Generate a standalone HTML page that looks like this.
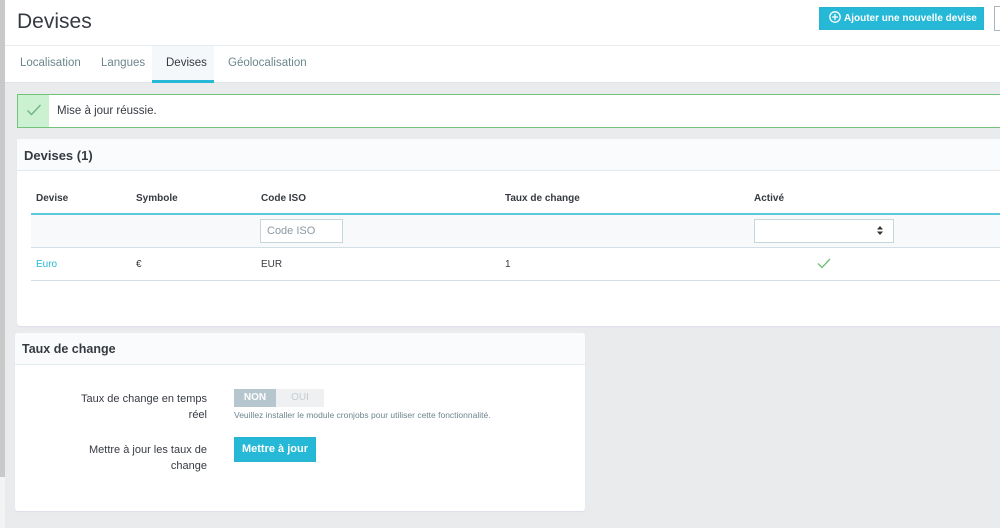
<!DOCTYPE html><html><head><meta charset="utf-8"><style>
*{box-sizing:border-box;margin:0;padding:0}
body{width:1000px;height:528px;overflow:hidden;background:#eaebec;font-family:"Liberation Sans",sans-serif;color:#363a41;position:relative;font-size:12px}
.a{position:absolute;white-space:nowrap}
</style></head><body>
<div class="a" style="left:0;top:0;width:5px;height:477px;background:#c9c9c9"></div>
<div class="a" style="left:0;top:477px;width:5px;height:51px;background:#f3f3f3"></div>
<div class="a" style="left:5px;top:0;width:995px;height:83px;background:#fff;border-bottom:1px solid #dde2e6"></div>
<div class="a" style="left:5px;top:45px;width:995px;height:1px;background:#e8ebee"></div>
<div class="a" style="left:17px;top:10px;font-size:21px;color:#363a41">Devises</div>
<div class="a" style="left:819px;top:7px;width:165px;height:23px;background:#25b9d7;color:#fff;font-weight:bold;font-size:10px;line-height:21px;padding-left:9px;border:1px solid #2ab3cf;overflow:hidden">
<svg width="12" height="12" viewBox="0 0 12 12" style="vertical-align:-2px;margin-right:3px"><circle cx="6" cy="6" r="5.2" fill="none" stroke="#fff" stroke-width="1.3"/><path d="M6 3v6M3 6h6" stroke="#fff" stroke-width="1.3"/></svg>Ajouter une nouvelle devise</div>
<div class="a" style="left:994px;top:6px;width:20px;height:25px;border:1px solid #aab4bb;background:#fff"></div>
<div class="a" style="left:152px;top:46px;width:62px;height:37px;background:#f4f8fa;border-bottom:3px solid #25b9d7"></div>
<div class="a" style="left:20px;top:57px;font-size:11.5px;color:#6c868e">Localisation</div>
<div class="a" style="left:101px;top:57px;font-size:11.5px;color:#6c868e">Langues</div>
<div class="a" style="left:166px;top:57px;font-size:11.5px;color:#363a41">Devises</div>
<div class="a" style="left:228px;top:57px;font-size:11.5px;color:#6c868e">Géolocalisation</div>
<div class="a" style="left:17px;top:94px;width:990px;height:34px;background:#fff;border:1px solid #72c279"></div>
<div class="a" style="left:18px;top:95px;width:31px;height:32px;background:#cbf0d2"></div>
<svg class="a" style="left:26px;top:103px" width="16" height="14" viewBox="0 0 16 14"><path d="M1.5 7.5l4 4L14.5 2" fill="none" stroke="#70b580" stroke-width="1.4"/></svg>
<div class="a" style="left:57px;top:105px;font-size:11.5px">Mise à jour réussie.</div>
<div class="a" style="left:17px;top:139px;width:990px;height:187px;background:#fff;border-radius:3px;box-shadow:0 1px 1px #dde"></div>
<div class="a" style="left:17px;top:139px;width:990px;height:32px;background:#fafbfc;border-bottom:1px solid #e3eaee"></div>
<div class="a" style="left:24px;top:148px;font-size:13px;font-weight:bold;color:#363a41">Devises (1)</div>
<div class="a" style="top:193px;left:36px;font-size:10px;font-weight:bold">Devise</div>
<div class="a" style="top:193px;left:136px;font-size:10px;font-weight:bold">Symbole</div>
<div class="a" style="top:193px;left:261px;font-size:10px;font-weight:bold">Code ISO</div>
<div class="a" style="top:193px;left:505px;font-size:10px;font-weight:bold">Taux de change</div>
<div class="a" style="top:193px;left:754px;font-size:10px;font-weight:bold">Activé</div>
<div class="a" style="left:31px;top:213px;width:970px;height:2px;background:#5bc8de"></div>
<div class="a" style="left:31px;top:215px;width:970px;height:33px;background:#f8f9fb;border-bottom:1px solid #d3dfe5"></div>
<div class="a" style="left:260px;top:219px;width:83px;height:24px;background:#fff;border:1px solid #c7d6db;color:#8a9aa2;font-size:11px;line-height:22px;padding-left:6px">Code ISO</div>
<div class="a" style="left:754px;top:219px;width:140px;height:24px;background:#fff;border:1px solid #c7d6db"></div>
<svg class="a" style="left:877px;top:226px" width="6" height="9" viewBox="0 0 6 9"><path d="M0 3.5L3 0L6 3.5ZM0 5.5L3 9L6 5.5Z" fill="#333"/></svg>
<div class="a" style="left:36px;top:259px;font-size:10px;color:#25b9d7">Euro</div>
<div class="a" style="left:136px;top:259px;font-size:10px">€</div>
<div class="a" style="left:261px;top:259px;font-size:10px">EUR</div>
<div class="a" style="left:505px;top:259px;font-size:10px">1</div>
<svg class="a" style="left:817px;top:258px" width="14" height="11" viewBox="0 0 14 11"><path d="M1 5.5l4 4L13 1" fill="none" stroke="#72c279" stroke-width="1.4"/></svg>
<div class="a" style="left:31px;top:280px;width:970px;height:1px;background:#d3dfe5"></div>
<div class="a" style="left:15px;top:333px;width:570px;height:178px;background:#fff;border-radius:3px;box-shadow:0 1px 1px #dde"></div>
<div class="a" style="left:15px;top:333px;width:570px;height:32px;background:#fafbfc;border-bottom:1px solid #e3eaee;border-radius:3px 3px 0 0"></div>
<div class="a" style="left:22px;top:342px;font-size:12.5px;font-weight:bold">Taux de change</div>
<div class="a" style="left:60px;top:391px;width:147px;text-align:right;font-size:11px;line-height:16px">Taux de change en temps<br>réel</div>
<div class="a" style="left:234px;top:389px;width:42px;height:18px;background:#b6c6ce;color:#fff;font-size:10px;line-height:18px;text-align:center;font-weight:bold">NON</div>
<div class="a" style="left:276px;top:389px;width:48px;height:18px;background:#eef0f2;color:#c5ccd0;font-size:10px;line-height:18px;text-align:center">OUI</div>
<div class="a" style="left:234px;top:410px;font-size:8.5px;color:#6c868e">Veuillez installer le module cronjobs pour utiliser cette fonctionnalité.</div>
<div class="a" style="left:60px;top:442px;width:147px;text-align:right;font-size:11px;line-height:16px">Mettre à jour les taux de<br>change</div>
<div class="a" style="left:234px;top:437px;width:82px;height:25px;background:#25b9d7;color:#fff;font-weight:bold;font-size:11px;line-height:23px;text-align:center;border:1px solid #2ab3cf">Mettre à jour</div>
</body></html>
